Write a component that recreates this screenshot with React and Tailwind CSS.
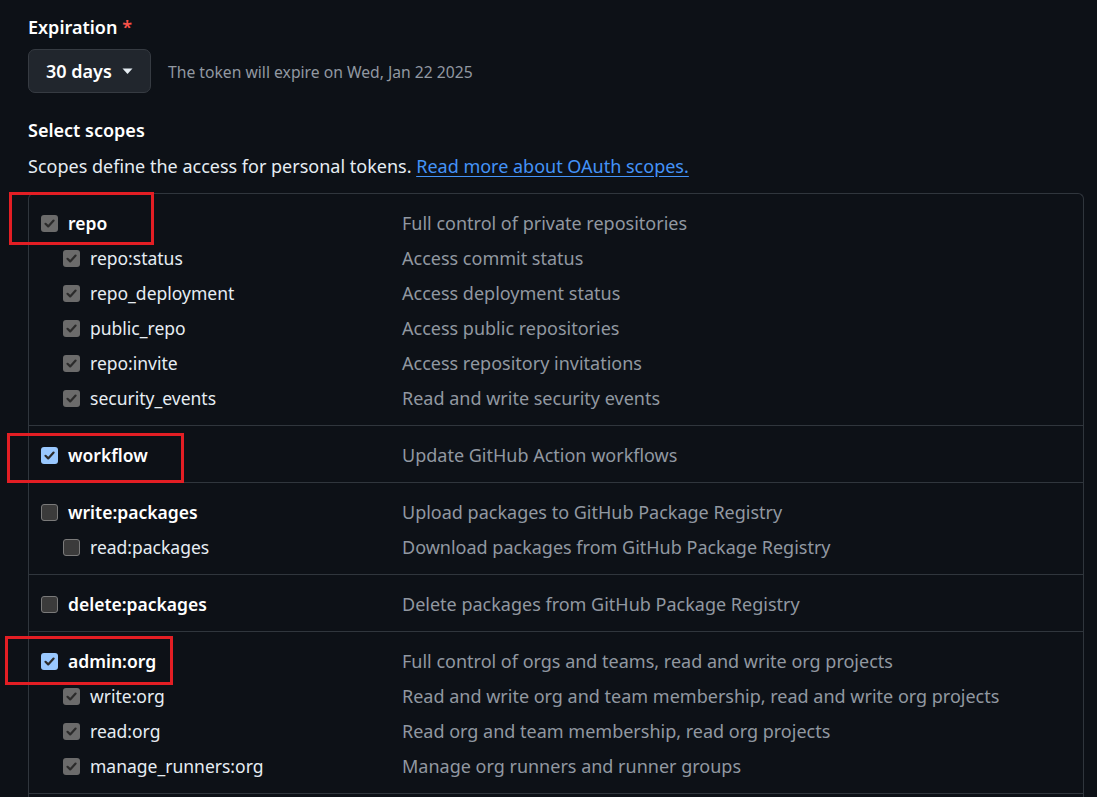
import React from "react";

const groups = [
  [
    { name: "repo", desc: "Full control of private repositories", state: "locked", top: true },
    { name: "repo:status", desc: "Access commit status", state: "locked" },
    { name: "repo_deployment", desc: "Access deployment status", state: "locked" },
    { name: "public_repo", desc: "Access public repositories", state: "locked" },
    { name: "repo:invite", desc: "Access repository invitations", state: "locked" },
    { name: "security_events", desc: "Read and write security events", state: "locked" },
  ],
  [{ name: "workflow", desc: "Update GitHub Action workflows", state: "on", top: true }],
  [
    { name: "write:packages", desc: "Upload packages to GitHub Package Registry", state: "off", top: true },
    { name: "read:packages", desc: "Download packages from GitHub Package Registry", state: "off" },
  ],
  [{ name: "delete:packages", desc: "Delete packages from GitHub Package Registry", state: "off", top: true }],
  [
    { name: "admin:org", desc: "Full control of orgs and teams, read and write org projects", state: "on", top: true },
    { name: "write:org", desc: "Read and write org and team membership, read and write org projects", state: "locked" },
    { name: "read:org", desc: "Read org and team membership, read org projects", state: "locked" },
    { name: "manage_runners:org", desc: "Manage org runners and runner groups", state: "locked" },
  ],
];

// native-looking dark mode checkbox
const Checkbox = ({ state }) => {
  if (state === "off") {
    return <span className="block h-[17px] w-[17px] shrink-0 rounded-[3px] border border-[#7a7a7a] bg-[#3b3b3b]" />;
  }
  const bg = state === "on" ? "bg-[#99c8ff]" : "bg-[#6b6b6b]";
  return (
    <span className={`flex h-[17px] w-[17px] shrink-0 items-center justify-center rounded-[3px] ${bg}`}>
      <svg width="13" height="13" viewBox="0 0 13 13">
        <path d="M2.5 6.8 L5.2 9.4 L10.6 3.6" fill="none" stroke="#2b2b2b" strokeWidth="2.2" strokeLinecap="round" strokeLinejoin="round" />
      </svg>
    </span>
  );
};

const ScopeRow = ({ scope }) => (
  <div className="flex h-[35px] items-center">
    <div className={`flex w-[373px] items-center gap-[10px] text-[17.5px] ${scope.top ? "pl-[12px]" : "pl-[34px]"}`}>
      <Checkbox state={scope.state} />
      <span className={scope.top ? "font-semibold text-white" : "text-[#e6edf3]"}>{scope.name}</span>
    </div>
    <div className="text-[18px] text-[#9198a1]">{scope.desc}</div>
  </div>
);

export default function App() {
  return (
    <div className="min-h-screen overflow-hidden bg-[#0d1117] text-[18px] text-[#e6edf3] font-['Noto_Sans',sans-serif]">
      <div className="relative h-[797px] pl-[28px] pt-[15px]">
        {/* Expiration */}
        <div className="leading-[24px] font-semibold text-white">
          Expiration <span className="text-[#f85149]">*</span>
        </div>
        <div className="mt-[10px] flex items-center gap-[17px]">
          <button className="flex h-[44px] w-[123px] items-center gap-[10px] rounded-[7px] border border-[#363b42] bg-[#21262d] pl-[17px] text-[18px] font-semibold text-white">
            30 days
            <svg width="11" height="7" viewBox="0 0 11 7">
              <path d="M0.5 0.5 L10.5 0.5 L5.5 6 Z" fill="#e6edf3" />
            </svg>
          </button>
          <span className="pt-[4px] text-[15.7px] text-[#9198a1]">The token will expire on Wed, Jan 22 2025</span>
        </div>

        {/* Scopes */}
        <div className="mt-[25px] leading-[24px] font-semibold text-white">Select scopes</div>
        <div className="mt-[12px] leading-[24px]">
          Scopes define the access for personal tokens.{" "}
          <a className="text-[#4493f8] underline underline-offset-[3px]">Read more about OAuth scopes.</a>
        </div>

        <div className="mt-[15px] w-[1056px] rounded-t-[6px] border border-b-0 border-[#30363d]">
          {groups.map((group, i) => (
            <div key={i} className={`pt-[12px] pb-[9px] ${i > 0 ? "border-t border-[#30363d]" : ""}`}>
              {group.map((scope) => (
                <ScopeRow key={scope.name} scope={scope} />
              ))}
            </div>
          ))}
          <div className="h-[40px] border-t border-[#30363d]" />
        </div>

        {/* annotation boxes */}
        <div className="absolute left-[9px] top-[192px] h-[53px] w-[145px] border-[3px] border-[#e31e24]" />
        <div className="absolute left-[7px] top-[433px] h-[50px] w-[177px] border-[3px] border-[#e31e24]" />
        <div className="absolute left-[5px] top-[636px] h-[49px] w-[168px] border-[3px] border-[#e31e24]" />
      </div>
    </div>
  );
}
